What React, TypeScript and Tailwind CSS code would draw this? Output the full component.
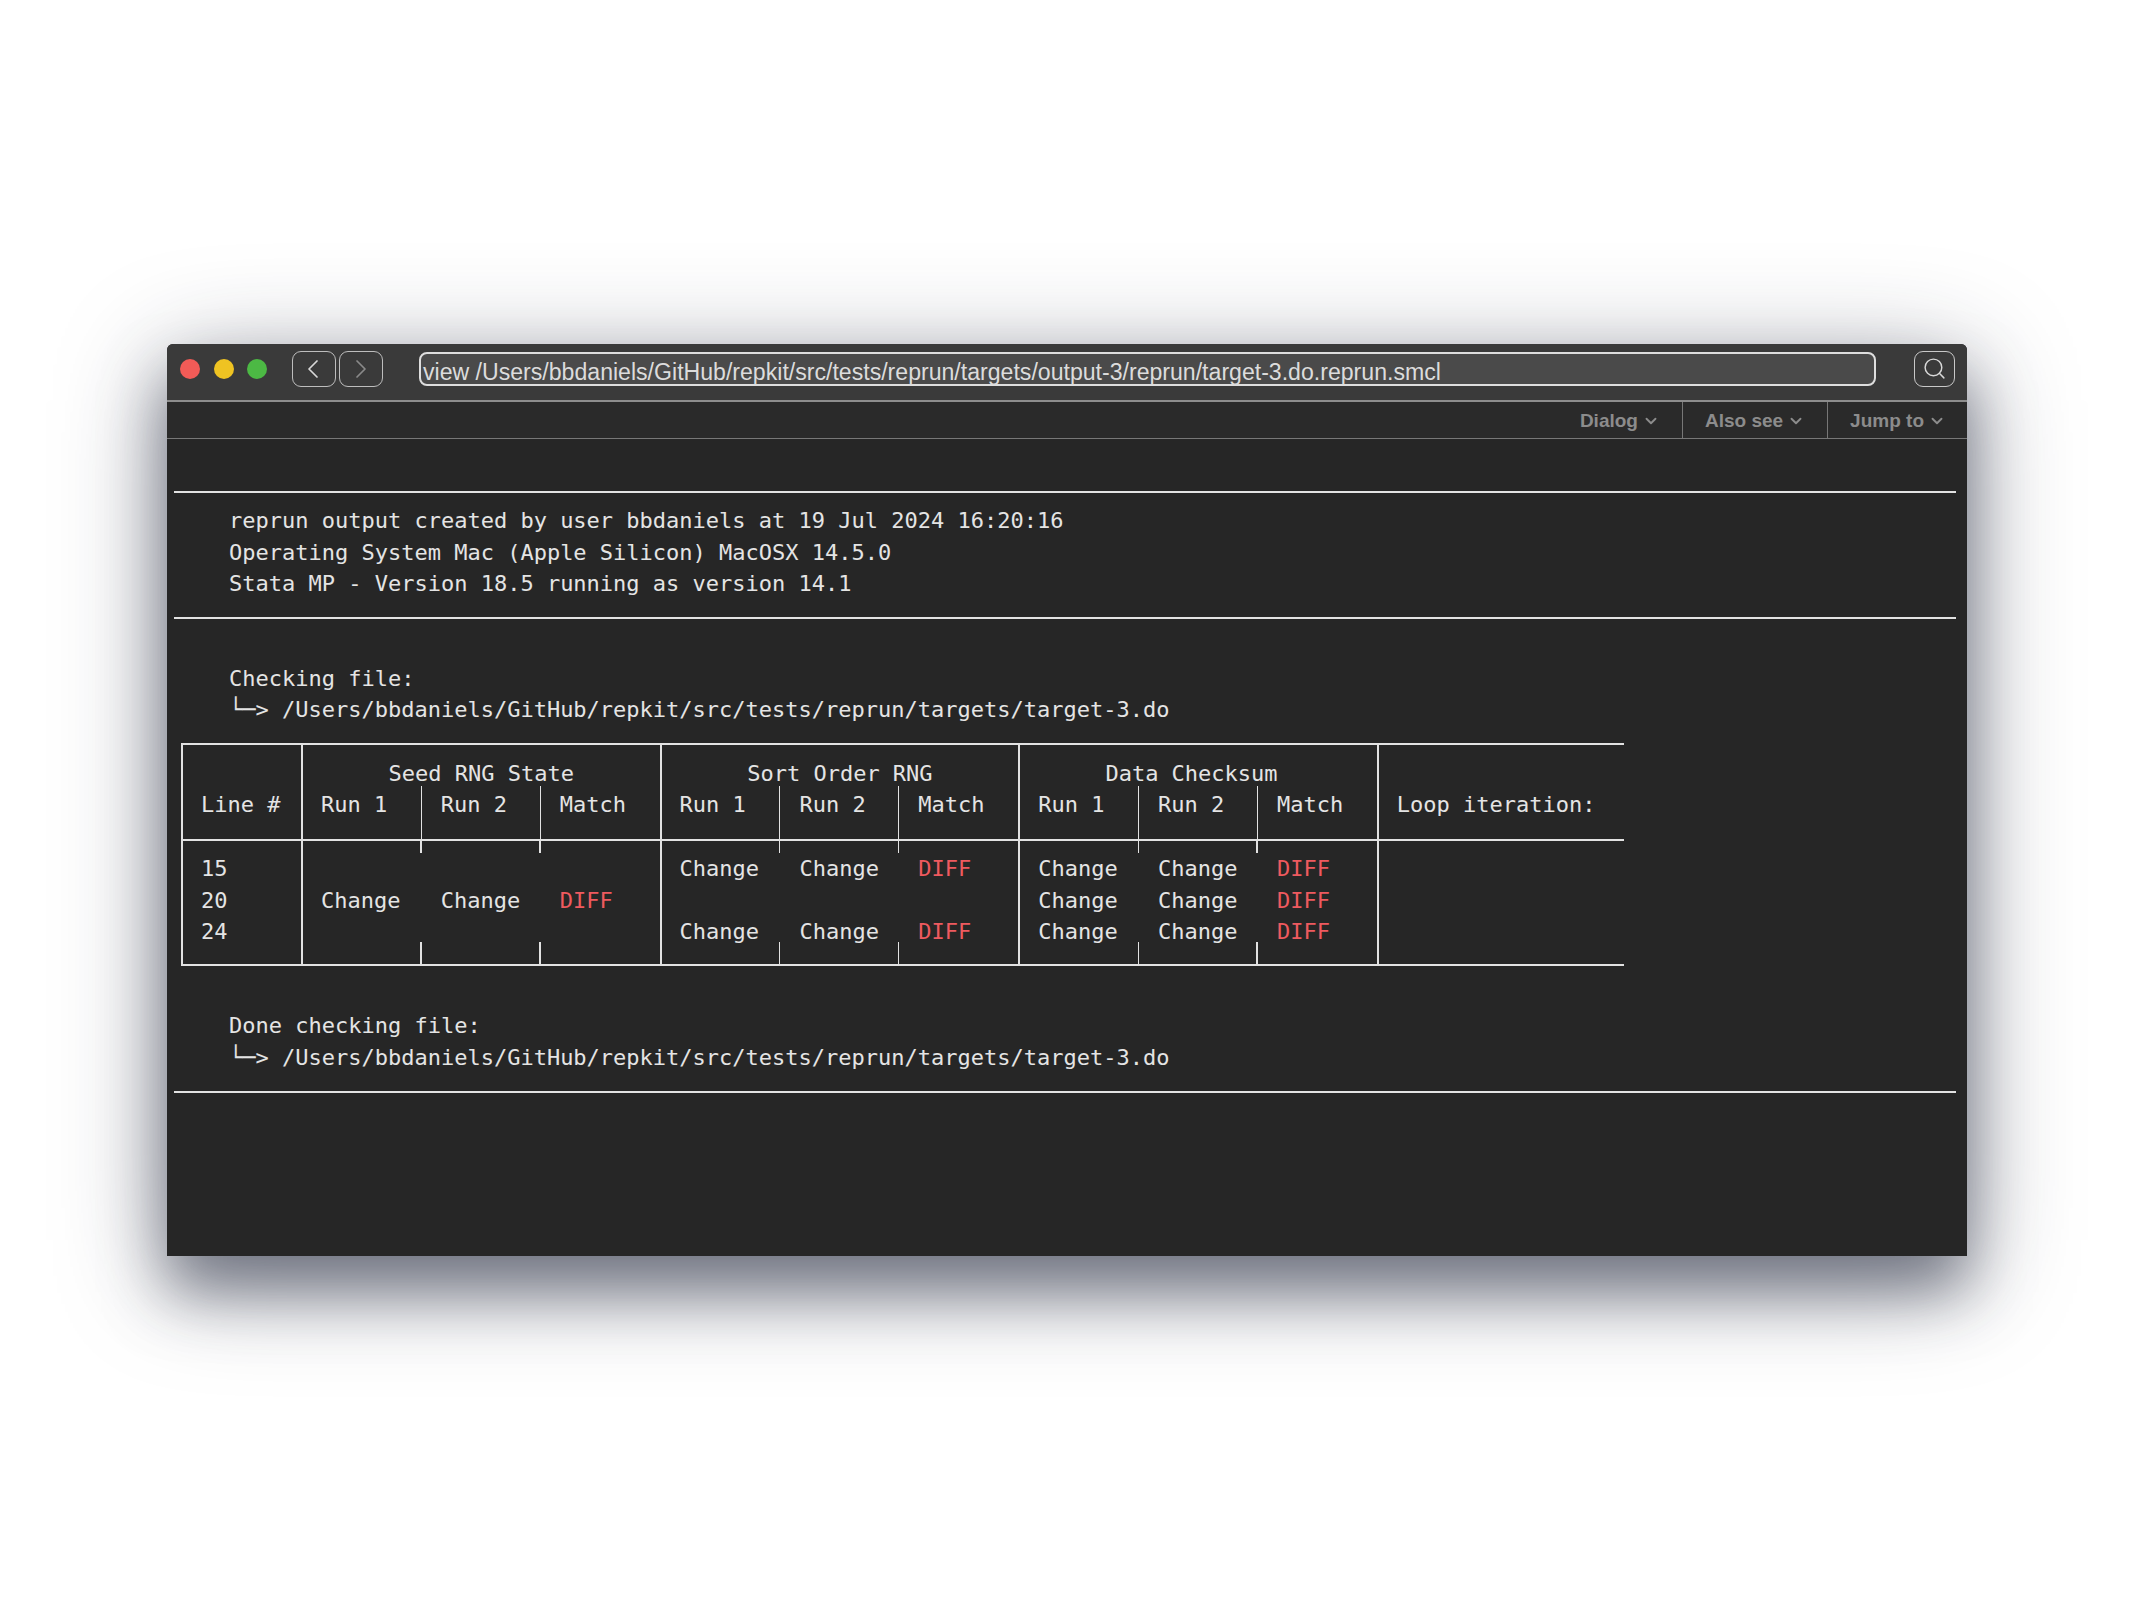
import { ChevronDown, ChevronLeft, ChevronRight, Search } from "lucide-react";

const mono = "font-['DejaVu_Sans_Mono','Liberation_Mono',monospace] text-[22px] leading-[31.6px] text-[#e4e4e4] whitespace-pre";
const PATH = "/Users/bbdaniels/GitHub/repkit/src/tests/reprun/targets/target-3.do";

function Rule({ className = "" }: { className?: string }) {
  return <div className={"h-[2px] bg-[#e2e2e2] " + className} />;
}

function Menu({ label, className = "" }: { label: string; className?: string }) {
  return (
    <div className={"flex h-full items-center gap-[4px] pt-[2px] text-[19px] font-bold text-[#8c8c8c] " + className}>
      <span>{label}</span>
      <ChevronDown size={18} strokeWidth={2.5} />
    </div>
  );
}

type Cell = string;
function SubCol({ rows, last, index }: { rows: Cell[]; last?: boolean; index: number }) {
  return (
    <div className={"relative w-1/3 " + (index === 0 ? "pl-[18px]" : "pl-[19px]")}>
      <div className="flex h-full flex-col pt-[12px]">
        {rows.map((r, i) => (
          <div key={i} className={"h-[31.6px] " + (r === "DIFF" ? "text-[#ee5a5f]" : "")}>{r}</div>
        ))}
      </div>
      {!last && <div className="absolute right-0 top-0 h-[12px] w-[1.5px] bg-[#e2e2e2]" />}
      {!last && <div className="absolute bottom-0 right-0 h-[22px] w-[1.5px] bg-[#e2e2e2]" />}
    </div>
  );
}

function HeadGroup({ title, titleClass = "" }: { title: string; titleClass?: string }) {
  return (
    <div className="flex w-[358.6px] shrink-0 flex-col border-r-2 border-[#e2e2e2]">
      <div className={"h-[41px] pt-[13px] text-center " + titleClass}>{title}</div>
      <div className="flex flex-1">
        {["Run 1", "Run 2", "Match"].map((h, i) => (
          <div key={h} className={"w-1/3 pt-[3px] " + (i === 0 ? "pl-[18px] " : "pl-[19px] ") + (i < 2 ? "border-r-[1.5px] border-[#e2e2e2]" : "")}>{h}</div>
        ))}
      </div>
    </div>
  );
}

function BodyGroup({ cols }: { cols: Cell[][] }) {
  return (
    <div className="flex w-[358.6px] shrink-0 border-r-2 border-[#e2e2e2]">
      {cols.map((rows, i) => (
        <SubCol key={i} index={i} rows={rows} last={i === 2} />
      ))}
    </div>
  );
}

export default function App() {
  return (
    <div className="min-h-[1600px] bg-white pl-[167px] pt-[344px]">
      <div className="flex h-[912px] w-[1800px] flex-col rounded-t-[6px] bg-[#262626] shadow-[0_36px_60px_rgba(40,45,65,0.5),0_20px_110px_rgba(30,35,55,0.4)]">
        <div className="flex h-[58px] shrink-0 items-center rounded-t-[6px] border-b-2 border-[#8d8d8d] bg-[#3a3a3a] pb-[6px] pl-[13px]">
          <div className="h-[20px] w-[20px] rounded-full bg-[#f25b57]" />
          <div className="ml-[13.5px] h-[20px] w-[20px] rounded-full bg-[#efc322]" />
          <div className="ml-[13.5px] h-[20px] w-[20px] rounded-full bg-[#4cb944]" />
          <div className="ml-[25px] flex h-[36px] w-[44px] items-center justify-center rounded-[9px] border border-[#bdbdbd] pr-[3px] text-[#d8d8d8]">
            <ChevronLeft size={32} strokeWidth={1.3} />
          </div>
          <div className="ml-[3px] flex h-[36px] w-[44px] items-center justify-center rounded-[9px] border border-[#bdbdbd] text-[#8a8a8a]">
            <ChevronRight size={32} strokeWidth={1.3} />
          </div>
          <div className="ml-[36px] flex h-[34px] w-[1457px] items-center rounded-[8px] border-2 border-[#dedede] bg-[#4a4a4a] pl-[2px] pt-[6px] font-['Liberation_Sans',Arial,sans-serif] text-[23.1px] text-[#dcdcdc]">
            view /Users/bbdaniels/GitHub/repkit/src/tests/reprun/targets/output-3/reprun/target-3.do.reprun.smcl
          </div>
          <div className="ml-[38px] flex h-[36px] w-[41px] items-center justify-center rounded-[9px] border border-[#c8c8c8] pb-[2px] text-[#d8d8d8]">
            <Search size={25} strokeWidth={1.4} />
          </div>
        </div>

        <div className="flex h-[37px] shrink-0 justify-end border-b border-[#777777] bg-[#2a2a2a] font-['Liberation_Sans',Arial,sans-serif]">
          <Menu label="Dialog" className="pr-[22px]" />
          <Menu label="Also see" className="border-l border-[#777777] pl-[22px] pr-[22px]" />
          <Menu label="Jump to" className="border-l border-[#777777] pl-[22px] pr-[21px]" />
        </div>

        <div className={"flex flex-1 flex-col pl-[7px] pr-[11px] pt-[52px] " + mono}>
          <Rule />
          <div className="pl-[55px] pt-[12px]">
            <div>reprun output created by user bbdaniels at 19 Jul 2024 16:20:16</div>
            <div>Operating System Mac (Apple Silicon) MacOSX 14.5.0</div>
            <div>Stata MP - Version 18.5 running as version 14.1</div>
          </div>
          <Rule className="mt-[17px]" />
          <div className="pl-[55px] pt-[44px]">
            <div>Checking file:</div>
            <div>{"└─> " + PATH}</div>
          </div>

          <div className="ml-[7px] mt-[17px] w-[1443px] border-b-2 border-l-2 border-t-2 border-[#e2e2e2]">
            <div className="flex h-[96px] border-b-2 border-[#e2e2e2]">
              <div className="flex w-[120px] shrink-0 flex-col border-r-2 border-[#e2e2e2] pl-[18px] pt-[44px]">Line #</div>
              <HeadGroup title="Seed RNG State" />
              <HeadGroup title="Sort Order RNG" />
              <HeadGroup title="Data Checksum" titleClass="pr-[14px]" />
              <div className="pl-[18px] pt-[44px]">Loop iteration:</div>
            </div>
            <div className="flex h-[123px]">
              <div className="w-[120px] shrink-0 border-r-2 border-[#e2e2e2] pl-[18px] pt-[12px]">
                <div>15</div>
                <div>20</div>
                <div>24</div>
              </div>
              <BodyGroup cols={[["", "Change", ""], ["", "Change", ""], ["", "DIFF", ""]]} />
              <BodyGroup cols={[["Change", "", "Change"], ["Change", "", "Change"], ["DIFF", "", "DIFF"]]} />
              <BodyGroup cols={[["Change", "Change", "Change"], ["Change", "Change", "Change"], ["DIFF", "DIFF", "DIFF"]]} />
            </div>
          </div>

          <div className="pl-[55px] pt-[44px]">
            <div>Done checking file:</div>
            <div>{"└─> " + PATH}</div>
          </div>
          <Rule className="mt-[18px]" />
        </div>
      </div>
    </div>
  );
}
